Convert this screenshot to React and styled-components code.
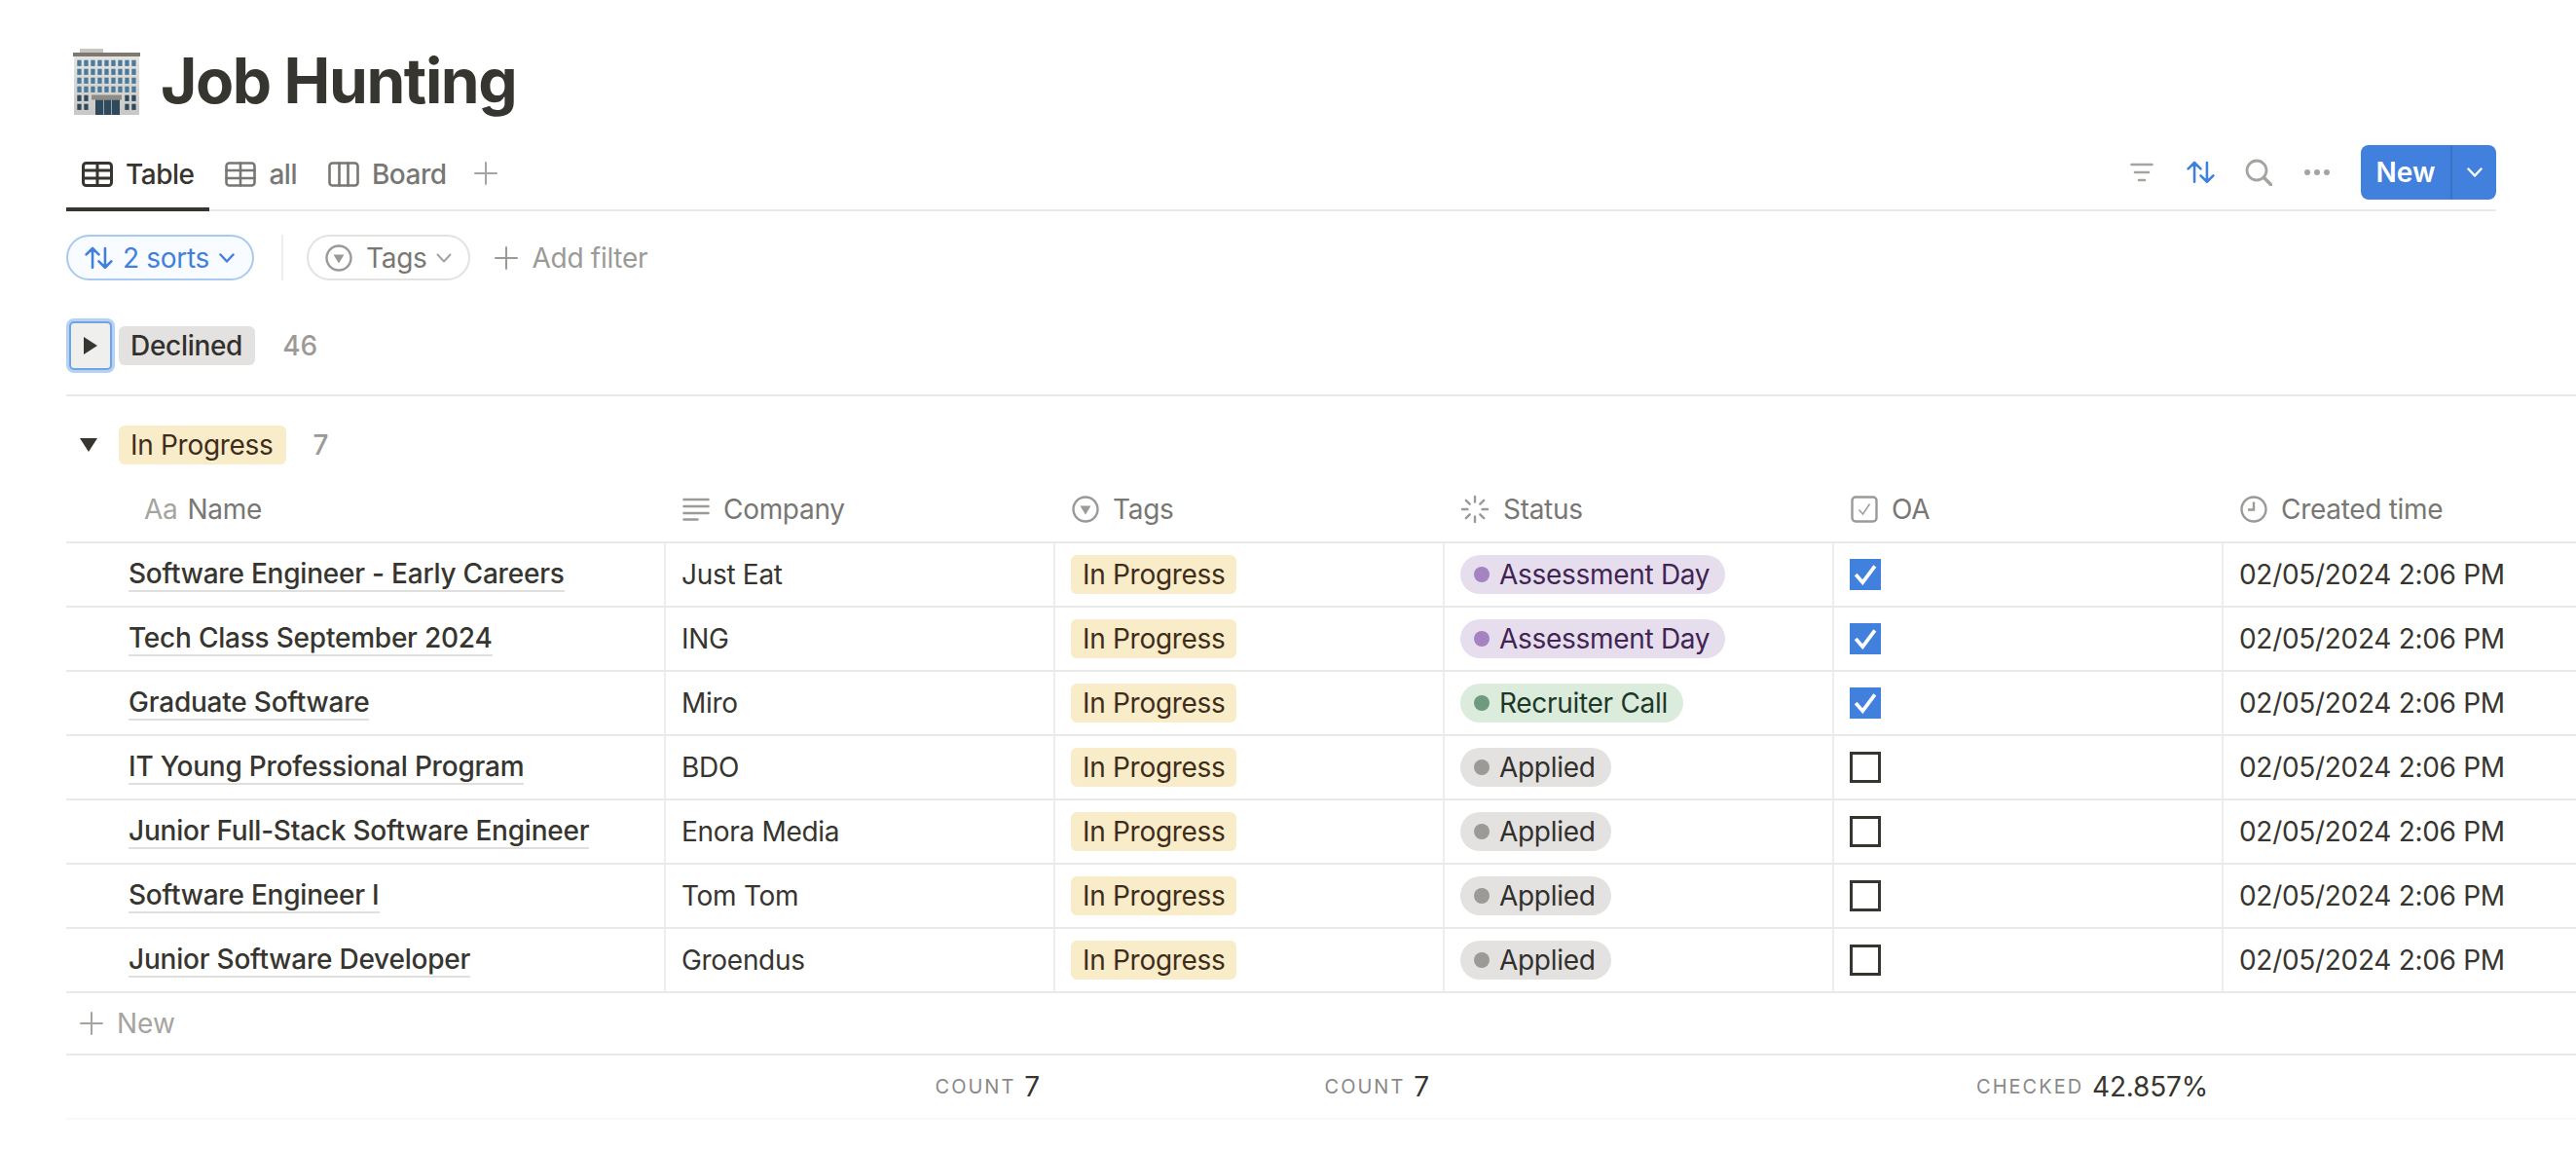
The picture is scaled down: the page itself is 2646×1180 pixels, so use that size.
import React from 'react';
import styled, { createGlobalStyle } from 'styled-components';

const Global = createGlobalStyle`
  html, body {
    margin: 0;
    background: #fff;
    overflow: hidden;
  }
  body {
    font-family: Inter, "Noto Sans", sans-serif;
    color: #37352f;
  }
`;

const Page = styled.div`
  width: 2646px;
  height: 1180px;
  padding: 50px 0 0 68px;
  box-sizing: border-box;
  overflow: hidden;
`;

const TitleRow = styled.div`
  display: flex;
  align-items: center;
  height: 68px;
  padding-left: 7px;
  gap: 21px;
`;

const Title = styled.h1`
  margin: -2px 0 0;
  font-size: 64px;
  font-weight: 700;
  letter-spacing: -1.4px;
  line-height: 68px;
  color: #37352f;
`;

const ViewBar = styled.div`
  display: flex;
  justify-content: space-between;
  width: 2496px;
  height: 75px;
  margin-top: 22px;
  border-bottom: 2px solid #e9e9e7;
`;

const Tabs = styled.div`
  display: flex;
  align-items: stretch;
`;

const Tab = styled.div`
  display: flex;
  align-items: center;
  gap: 13px;
  padding: 0 16px;
  margin-bottom: -2px;
  font-size: 28px;
  font-weight: 500;
  letter-spacing: -0.5px;
  color: ${(p) => (p.$active ? '#37352f' : '#787774')};
  box-shadow: ${(p) => (p.$active ? 'inset 0 -4px 0 #37352f' : 'none')};
`;

const AddTab = styled.div`
  display: flex;
  align-items: center;
  padding-left: 12px;
  color: #a5a4a0;
`;

const Actions = styled.div`
  display: flex;
  align-items: center;
  padding-bottom: 1px;
`;

const ActionIcon = styled.span`
  display: flex;
  width: ${(p) => p.$w || 32}px;
  margin-right: ${(p) => p.$gap || 28}px;
  justify-content: center;
  color: ${(p) => (p.$blue ? '#3f80dc' : '#a5a4a0')};
`;

const NewButton = styled.div`
  display: flex;
  width: 139px;
  height: 56px;
  border-radius: 8px;
  background: #4180dc;
  color: #fff;
  overflow: hidden;
  font-size: 28px;
  font-weight: 600;
`;

const NewLabel = styled.div`
  display: flex;
  align-items: center;
  justify-content: center;
  width: 92px;
  border-right: 2px solid #3a72c5;
`;

const NewCaret = styled.div`
  display: flex;
  flex: 1;
  align-items: center;
  justify-content: center;
`;

const FilterBar = styled.div`
  display: flex;
  align-items: center;
  height: 47px;
  margin-top: 24px;
`;

const Chip = styled.div`
  display: flex;
  align-items: center;
  box-sizing: border-box;
  height: 47px;
  padding: 0 ${(p) => (p.$blue ? 18 : 17)}px 0 ${(p) => (p.$blue ? 17 : 17)}px;
  gap: ${(p) => (p.$blue ? 10 : 14)}px;
  border-radius: 24px;
  border: 2px solid ${(p) => (p.$blue ? '#a9c9f1' : '#e3e2e0')};
  background: ${(p) => (p.$blue ? '#f8fbff' : '#fff')};
  color: ${(p) => (p.$blue ? '#3f80dc' : '#787774')};
  font-size: 28px;
  letter-spacing: -0.3px;
`;

const ChipCaret = styled.span`
  display: flex;
  margin-left: -5px;
  color: #a5a4a0;
`;

const BarDivider = styled.div`
  width: 2px;
  height: 47px;
  margin: 0 24px 0 28px;
  background: #ededec;
`;

const AddFilter = styled.div`
  display: flex;
  align-items: center;
  gap: 15px;
  margin-left: 25px;
  color: #9b9a97;
  font-size: 28px;
  letter-spacing: -0.3px;
`;

const DeclinedSection = styled.div`
  display: flex;
  align-items: center;
  margin-top: 39px;
  padding-bottom: 22px;
  border-bottom: 2px solid #e9e9e7;
`;

const FocusToggle = styled.div`
  display: flex;
  align-items: center;
  justify-content: center;
  box-sizing: border-box;
  width: 44px;
  height: 50px;
  margin: 3px 7px 3px 3px;
  border-radius: 5px;
  background: #efefee;
  border: 2px solid #6fa3e6;
  box-shadow: 0 0 0 3px #b5d1f3;
`;

const GroupRow = styled.div`
  display: flex;
  align-items: center;
  margin-top: ${(p) => p.$top || 0}px;
`;

const OpenToggle = styled.div`
  display: flex;
  justify-content: center;
  width: 46px;
  margin-right: 8px;
`;

const GroupPill = styled.span`
  display: inline-flex;
  align-items: center;
  height: 40px;
  padding: 0 13px 0 12px;
  border-radius: 6px;
  background: ${(p) => p.$bg};
  color: ${(p) => p.$fg};
  font-size: 28px;
  font-weight: ${(p) => p.$weight || 400};
  letter-spacing: -0.3px;
  white-space: nowrap;
`;

const GroupCount = styled.span`
  margin-left: 28px;
  font-size: 28px;
  font-weight: 500;
  color: #9b9a97;
`;

const Grid = styled.div`
  display: grid;
  grid-template-columns: 616px 400px 400px 400px 400px 400px;
  width: 2616px;
  box-sizing: border-box;
  border-bottom: 2px solid ${(p) => p.$line || '#e9e9e7'};
  height: ${(p) => p.$h}px;
`;

const HeadCell = styled.div`
  display: flex;
  align-items: center;
  gap: 14px;
  padding: 13px 0 0 ${(p) => p.$left || 17}px;
  color: #787774;
  font-size: 28px;
  letter-spacing: -0.3px;
`;

const AaMark = styled.span`
  color: #a5a4a0;
  margin-right: -4px;
`;

const Cell = styled.div`
  display: flex;
  align-items: center;
  box-sizing: border-box;
  padding-left: ${(p) => p.$left || 16}px;
  border-right: 2px solid #ededec;
  font-size: 28px;
  letter-spacing: -0.3px;
  white-space: nowrap;
  color: #37352f;
`;

const NameText = styled.span`
  font-weight: 500;
  line-height: 33px;
  letter-spacing: -0.22px;
  border-bottom: 2px solid #dfdfdd;
`;

const TagPill = styled(GroupPill)`
  padding: 0 11px 0 12px;
`;

const StatusPill = styled.span`
  display: inline-flex;
  align-items: center;
  gap: 10px;
  height: 40px;
  padding: 0 16px 0 14px;
  border-radius: 20px;
  background: ${(p) => p.$bg};
  color: ${(p) => p.$fg};
`;

const Dot = styled.span`
  width: 16px;
  height: 16px;
  border-radius: 50%;
  background: ${(p) => p.$c};
`;

const CheckBox = styled.span`
  display: flex;
  align-items: center;
  justify-content: center;
  box-sizing: border-box;
  width: 32px;
  height: 32px;
  background: ${(p) => (p.$on ? '#4180dc' : '#fff')};
  border: ${(p) => (p.$on ? 'none' : '3px solid #37352f')};
`;

const NewRow = styled.div`
  display: flex;
  align-items: center;
  gap: 14px;
  width: 2616px;
  height: 64px;
  padding-left: 14px;
  box-sizing: border-box;
  border-bottom: 2px solid #e9e9e7;
  color: #a5a4a0;
  font-size: 28px;
`;

const FootCell = styled.div`
  display: flex;
  align-items: center;
  justify-content: flex-end;
  gap: 9px;
  padding-right: 16px;
`;

const FootLabel = styled.span`
  font-size: 20px;
  letter-spacing: 2px;
  color: #8a8987;
`;

const FootValue = styled.span`
  font-size: 28px;
  letter-spacing: -0.2px;
  color: #37352f;
`;

const Stroke = ({ w, h, vb, sw = 2, children }) => (
  <svg width={w} height={h} viewBox={vb} fill="none" stroke="currentColor" strokeWidth={sw} strokeLinecap="round" strokeLinejoin="round">
    {children}
  </svg>
);

const TableIcon = ({ active }) => (
  <Stroke w={32} h={26} vb="0 0 32 26" sw={active ? 3 : 2.6}>
    <rect x="1.5" y="1.5" width="29" height="23" rx="3" />
    <path d="M1.5 9h29M1.5 17h29M16 1.5v23" />
  </Stroke>
);

const BoardIcon = () => (
  <Stroke w={32} h={26} vb="0 0 32 26" sw={2.6}>
    <rect x="1.5" y="1.5" width="29" height="23" rx="3" />
    <path d="M11.5 1.5v23M20.5 1.5v23" />
  </Stroke>
);

const PlusIcon = ({ size = 24, sw = 2 }) => (
  <Stroke w={size} h={size} vb="0 0 24 24" sw={sw}>
    <path d="M12 1v22M1 12h22" />
  </Stroke>
);

const SortIcon = ({ size = 29 }) => (
  <Stroke w={size} h={size * 0.82} vb="0 0 29 24" sw={2.6}>
    <path d="M8 22V2M1.5 8.5 8 2l6.5 6.5M21 2v20M14.5 15.5 21 22l6.5-6.5" />
  </Stroke>
);

const FilterIcon = () => (
  <Stroke w={24} h={20} vb="0 0 24 20" sw={2.6}>
    <path d="M1.5 2h21M5 10h14M9 18h6" />
  </Stroke>
);

const SearchIcon = () => (
  <Stroke w={28} h={28} vb="0 0 28 28" sw={2.8}>
    <circle cx="12" cy="12" r="10" />
    <path d="M19.5 19.5 26.5 26.5" strokeWidth="3.6" />
  </Stroke>
);

const DotsIcon = () => (
  <svg width="26" height="6" viewBox="0 0 26 6" fill="currentColor">
    <circle cx="3" cy="3" r="3" />
    <circle cx="13" cy="3" r="3" />
    <circle cx="23" cy="3" r="3" />
  </svg>
);

const Chevron = ({ w = 16, h = 10, sw = 2.4 }) => (
  <Stroke w={w} h={h} vb="0 0 16 10" sw={sw}>
    <path d="M1.5 1.5 8 8.5l6.5-7" />
  </Stroke>
);

const TagsIcon = () => (
  <svg width="28" height="28" viewBox="0 0 28 28">
    <circle cx="14" cy="14" r="12.5" fill="none" stroke="#9b9a97" strokeWidth="2.4" />
    <path d="M8.5 10.5h11L14 19.5z" fill="#9b9a97" />
  </svg>
);

const CompanyIcon = () => (
  <Stroke w={28} h={24} vb="0 0 28 24" sw={2.6}>
    <path d="M1.5 2h25M1.5 9h25M1.5 16h25M1.5 22.5h14" stroke="#9b9a97" />
  </Stroke>
);

const StatusIcon = () => (
  <svg width="30" height="30" viewBox="0 0 30 30" stroke="#9b9a97" strokeWidth="2.4" strokeLinecap="round">
    {[0, 45, 90, 135, 180, 225, 270, 315].map((a) => (
      <line key={a} x1="15" y1="2" x2="15" y2="7.5" transform={`rotate(${a} 15 15)`} />
    ))}
  </svg>
);

const OaIcon = () => (
  <svg width="28" height="28" viewBox="0 0 28 28" fill="none" stroke="#9b9a97">
    <rect x="1.5" y="1.5" width="25" height="25" rx="3.5" strokeWidth="2.4" />
    <path d="M8.5 14.5 12.5 19 19.5 8.5" strokeWidth="1.4" />
  </svg>
);

const ClockIcon = () => (
  <svg width="28" height="28" viewBox="0 0 28 28" fill="none" stroke="#9b9a97" strokeWidth="2.4">
    <circle cx="14" cy="14" r="12.5" />
    <path d="M14 6.5V14.5H8" />
  </svg>
);

const Tick = () => (
  <svg width="24" height="22" viewBox="0 0 22 20" fill="none" stroke="#fff" strokeWidth="3.4">
    <path d="M2 10 8.5 17.5 20 2" />
  </svg>
);

const Triangle = ({ right }) => (
  <svg width={right ? 14 : 18} height={right ? 18 : 14} viewBox={right ? '0 0 14 18' : '0 0 18 14'} fill="#37352f">
    <path d={right ? 'M0 0 14 9 0 18z' : 'M0 0h18L9 14z'} />
  </svg>
);

const BuildingEmoji = () => {
  const wins = [];
  for (let r = 0; r < 6; r++) {
    for (let c = 0; c < 9; c++) {
      if (r >= 4 && c >= 2 && c <= 6) continue;
      wins.push(<rect key={`${r}-${c}`} x={4.3 + c * 7} y={11.7 + r * 9} width="4.3" height="6.2" fill={r > 3 ? '#2f4a5c' : '#4a7a9c'} />);
    }
  }
  return (
    <svg width="69" height="68" viewBox="0 0 69 68">
      <defs>
        <linearGradient id="wall" x1="0" y1="0" x2="0" y2="1">
          <stop offset="0" stopColor="#e6e4e1" />
          <stop offset="1" stopColor="#c9c8c5" />
        </linearGradient>
      </defs>
      <rect x="7" y="0" width="24" height="5" fill="#c9c6c0" />
      <rect x="0" y="4" width="69" height="4" fill="#7d7872" />
      <rect x="1" y="8" width="67" height="60" fill="url(#wall)" />
      {wins}
      <rect x="19" y="47.5" width="31" height="5" fill="#8f8c86" />
      <rect x="23" y="52.5" width="25" height="15.5" fill="#2f4a5c" />
      <path d="M31.5 52.5v15.5M39.5 52.5v15.5" stroke="#9aa4aa" strokeWidth="1" />
    </svg>
  );
};

const tag = { bg: '#f9ecc9', fg: '#402c1b' };
const statuses = {
  assess: { label: 'Assessment Day', bg: '#e6deed', fg: '#412454', dot: '#a583c2' },
  recruit: { label: 'Recruiter Call', bg: '#dcecdc', fg: '#1c3829', dot: '#6f9a7e' },
  applied: { label: 'Applied', bg: '#e3e2e0', fg: '#32302c', dot: '#9b9a97' },
};

const rows = [
  ['Software Engineer - Early Careers', 'Just Eat', 'assess', true],
  ['Tech Class September 2024', 'ING', 'assess', true],
  ['Graduate Software', 'Miro', 'recruit', true],
  ['IT Young Professional Program', 'BDO', 'applied', false],
  ['Junior Full-Stack Software Engineer', 'Enora Media', 'applied', false],
  ['Software Engineer I', 'Tom Tom', 'applied', false],
  ['Junior Software Developer', 'Groendus', 'applied', false],
];

export default function App() {
  return (
    <Page>
      <Global />
      <TitleRow>
        <BuildingEmoji />
        <Title>Job Hunting</Title>
      </TitleRow>

      <ViewBar>
        <Tabs>
          <Tab $active>
            <TableIcon active />
            Table
          </Tab>
          <Tab>
            <TableIcon />
            all
          </Tab>
          <Tab>
            <BoardIcon />
            Board
          </Tab>
          <AddTab>
            <PlusIcon />
          </AddTab>
        </Tabs>
        <Actions>
          <ActionIcon>
            <FilterIcon />
          </ActionIcon>
          <ActionIcon $blue>
            <SortIcon />
          </ActionIcon>
          <ActionIcon>
            <SearchIcon />
          </ActionIcon>
          <ActionIcon $gap={29}>
            <DotsIcon />
          </ActionIcon>
          <NewButton>
            <NewLabel>New</NewLabel>
            <NewCaret>
              <Chevron />
            </NewCaret>
          </NewButton>
        </Actions>
      </ViewBar>

      <FilterBar>
        <Chip $blue>
          <SortIcon />
          2 sorts
          <Chevron />
        </Chip>
        <BarDivider />
        <Chip>
          <TagsIcon />
          Tags
          <ChipCaret>
            <Chevron sw={2} />
          </ChipCaret>
        </Chip>
        <AddFilter>
          <PlusIcon />
          Add filter
        </AddFilter>
      </FilterBar>

      <DeclinedSection>
        <FocusToggle>
          <Triangle right />
        </FocusToggle>
        <GroupPill $bg="#e3e2e0" $fg="#32302c" $weight={500}>
          Declined
        </GroupPill>
        <GroupCount>46</GroupCount>
      </DeclinedSection>

      <GroupRow $top={30}>
        <OpenToggle>
          <Triangle />
        </OpenToggle>
        <GroupPill $bg={tag.bg} $fg={tag.fg}>
          In Progress
        </GroupPill>
        <GroupCount>7</GroupCount>
      </GroupRow>

      <Grid $h={81}>
        <HeadCell $left={80}>
          <AaMark>Aa</AaMark>
          Name
        </HeadCell>
        <HeadCell>
          <CompanyIcon />
          Company
        </HeadCell>
        <HeadCell>
          <TagsIcon />
          Tags
        </HeadCell>
        <HeadCell $left={16}>
          <StatusIcon />
          Status
        </HeadCell>
        <HeadCell>
          <OaIcon />
          OA
        </HeadCell>
        <HeadCell>
          <ClockIcon />
          Created time
        </HeadCell>
      </Grid>

      {rows.map(([name, company, status, checked]) => {
        const s = statuses[status];
        return (
          <Grid $h={66} key={name}>
            <Cell $left={64}>
              <NameText>{name}</NameText>
            </Cell>
            <Cell>{company}</Cell>
            <Cell>
              <TagPill $bg={tag.bg} $fg={tag.fg}>
                In Progress
              </TagPill>
            </Cell>
            <Cell>
              <StatusPill $bg={s.bg} $fg={s.fg}>
                <Dot $c={s.dot} />
                {s.label}
              </StatusPill>
            </Cell>
            <Cell>
              <CheckBox $on={checked}>{checked && <Tick />}</CheckBox>
            </Cell>
            <Cell>02/05/2024 2:06 PM</Cell>
          </Grid>
        );
      })}

      <NewRow>
        <PlusIcon sw={2} />
        New
      </NewRow>

      <Grid $h={66} $line="#f9f9f8">
        <div />
        <FootCell>
          <FootLabel>COUNT</FootLabel>
          <FootValue>7</FootValue>
        </FootCell>
        <FootCell>
          <FootLabel>COUNT</FootLabel>
          <FootValue>7</FootValue>
        </FootCell>
        <div />
        <FootCell>
          <FootLabel>CHECKED</FootLabel>
          <FootValue>42.857%</FootValue>
        </FootCell>
        <div />
      </Grid>
    </Page>
  );
}
